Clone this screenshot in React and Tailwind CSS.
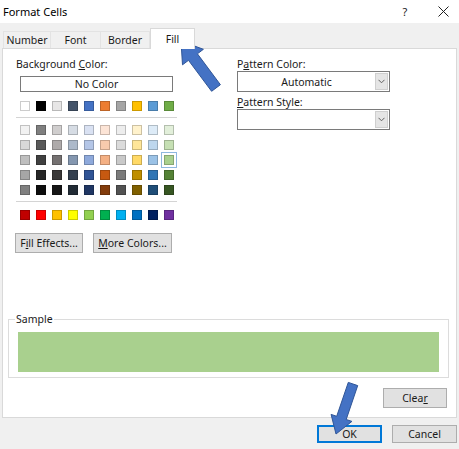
import React from "react";

const row1 = ["#FFFFFF", "#000000", "#E7E6E6", "#44546A", "#4472C4", "#ED7D31", "#A5A5A5", "#FFC000", "#5B9BD5", "#70AD47"];
const tints = [
  ["#F2F2F2", "#7F7F7F", "#D0CECE", "#D6DCE4", "#D9E1F2", "#FCE4D6", "#EDEDED", "#FFF2CC", "#DDEBF7", "#E2EFDA"],
  ["#D9D9D9", "#595959", "#AEAAAA", "#ACB9CA", "#B4C6E7", "#F8CBAD", "#DBDBDB", "#FFE699", "#BDD7EE", "#C6E0B4"],
  ["#BFBFBF", "#404040", "#757171", "#8497B0", "#8EA9DB", "#F4B084", "#C9C9C9", "#FFD966", "#9BC2E6", "#A9D08E"],
  ["#A6A6A6", "#262626", "#3A3838", "#333F4F", "#305496", "#C65911", "#7B7B7B", "#BF8F00", "#2F75B5", "#548235"],
  ["#808080", "#0D0D0D", "#161616", "#222B35", "#203764", "#833C0C", "#525252", "#806000", "#1F4E78", "#375623"],
];
const standard = ["#C00000", "#FF0000", "#FFC000", "#FFFF00", "#92D050", "#00B050", "#00B0F0", "#0070C0", "#002060", "#7030A0"];

function Swatch({ color, selected }) {
  return (
    <div
      className={
        "w-[10px] h-[10px] border border-black/20 " +
        (selected ? "outline outline-1 outline-offset-[2px] outline-[#8fb8e0]" : "")
      }
      style={{ backgroundColor: color }}
    />
  );
}

function SwatchRow({ colors, sel = -1 }) {
  return (
    <div className="flex gap-[6px] ml-[5px]">
      {colors.map((c, i) => (
        <Swatch key={i} color={c} selected={i === sel} />
      ))}
    </div>
  );
}

function Btn({ children, className = "" }) {
  return (
    <div
      className={
        "h-[20px] flex items-center justify-center bg-[#e1e1e1] border border-[#adadad] text-[#1a1a1a] " + className
      }
    >
      {children}
    </div>
  );
}

function Dropdown({ value }) {
  return (
    <div className="w-[153px] h-[21px] border border-[#7a7a7a] bg-white flex items-center">
      <div className="flex-1 text-center text-[#1a1a1a]">{value}</div>
      <div className="w-[13px] h-[17px] mr-[1px] bg-[#e5e5e5] border border-[#cfcfcf] flex items-center justify-center">
        <svg width="7" height="5" viewBox="0 0 7 5">
          <path d="M0.5 0.8 L3.5 3.8 L6.5 0.8" fill="none" stroke="#606060" strokeWidth="1" />
        </svg>
      </div>
    </div>
  );
}

function arrowPoints(tip, tail, shaftW, headW, headL) {
  const dx = tip[0] - tail[0];
  const dy = tip[1] - tail[1];
  const len = Math.hypot(dx, dy);
  const ux = dx / len;
  const uy = dy / len;
  const px = -uy;
  const py = ux;
  const bx = tip[0] - ux * headL;
  const by = tip[1] - uy * headL;
  const pts = [
    [tail[0] + (px * shaftW) / 2, tail[1] + (py * shaftW) / 2],
    [bx + (px * shaftW) / 2, by + (py * shaftW) / 2],
    [bx + (px * headW) / 2, by + (py * headW) / 2],
    tip,
    [bx - (px * headW) / 2, by - (py * headW) / 2],
    [bx - (px * shaftW) / 2, by - (py * shaftW) / 2],
    [tail[0] - (px * shaftW) / 2, tail[1] - (py * shaftW) / 2],
  ];
  return pts.map((p) => p[0].toFixed(1) + "," + p[1].toFixed(1)).join(" ");
}

export default function App() {
  return (
    <div
      className="relative w-[459px] h-[449px] bg-[#f0f0f0] flex flex-col text-[10.5px] leading-[14px] text-[#1a1a1a] overflow-hidden"
      style={{ fontFamily: '"Segoe UI", "Noto Sans", "Open Sans", sans-serif' }}
    >
      {/* Title bar */}
      <div className="h-[23px] bg-white flex items-center pl-[3px] pr-[10px]">
        <div className="flex-1 text-[11px] text-black">Format Cells</div>
        <div className="w-[10px] text-center text-[11px] mr-[28px]">?</div>
        <svg width="11" height="11" viewBox="0 0 11 11">
          <path d="M0.5 0.5 L10.5 10.5 M10.5 0.5 L0.5 10.5" stroke="#202020" strokeWidth="1" />
        </svg>
      </div>

      {/* Tabs */}
      <div className="h-[25px] flex items-end px-[3px]">
        <div className="w-[47px] h-[17px] flex items-center justify-center border-t border-l border-[#e3e3e3]">Number</div>
        <div className="w-[50px] h-[17px] flex items-center justify-center border-t border-l border-[#e3e3e3]">Font</div>
        <div className="w-[50px] h-[17px] flex items-center justify-center border-t border-l border-r border-[#e3e3e3]">Border</div>
        <div className="relative z-10 w-[45px] h-[21px] -mb-px bg-white flex items-center justify-center border-t border-l border-r border-[#d9d9d9]">
          Fill
        </div>
      </div>

      {/* Panel */}
      <div className="mx-[2px] h-[370px] bg-white border border-[#d9d9d9] flex flex-col">
        <div className="flex pt-[8px]">
          {/* Left column */}
          <div className="pl-[12px] w-[175px] flex flex-col">
            <div className="ml-px">
              Background <u>C</u>olor:
            </div>
            <div className="mt-[5px] ml-[5px] w-[153px] h-[16px] border border-[#7a7a7a] flex items-center justify-center">
              No Color
            </div>
            <div className="mt-[9px]">
              <SwatchRow colors={row1} />
            </div>
            <div className="mt-[6px] ml-px w-[161px] h-px bg-[#d4d4d4]" />
            <div className="mt-[7px] flex flex-col gap-[5px]">
              {tints.map((r, i) => (
                <SwatchRow key={i} colors={r} sel={i === 2 ? 9 : -1} />
              ))}
            </div>
            <div className="mt-[6px] ml-px w-[161px] h-px bg-[#d4d4d4]" />
            <div className="mt-[8px]">
              <SwatchRow colors={standard} />
            </div>
            <div className="mt-[13px] flex gap-[10px]">
              <Btn className="w-[68px]">
                F<u>i</u>ll Effects...
              </Btn>
              <Btn className="w-[79px]">
                <u>M</u>ore Colors...
              </Btn>
            </div>
          </div>

          {/* Right column */}
          <div className="ml-[59px] flex flex-col">
            <div>
              P<u>a</u>ttern Color:
            </div>
            <Dropdown value="Automatic" />
            <div className="mt-[3px]">
              <u>P</u>attern Style:
            </div>
            <Dropdown value="" />
          </div>
        </div>

        {/* Sample */}
        <fieldset className="mt-[59px] ml-[5px] mr-[7px] border border-[#dcdcdc] pt-[6px] pb-[5px]">
          <legend className="ml-[6px] px-px">Sample</legend>
          <div className="mx-[9px] h-[40px] bg-[#a9d08e]" />
        </fieldset>

        <div className="mt-[10px] flex justify-end pr-[9px]">
          <Btn className="w-[64px] h-[19px]">
            Clea<u>r</u>
          </Btn>
        </div>
      </div>

      {/* Footer */}
      <div className="flex justify-end gap-[10px] pt-[7px] pr-[2px]">
        <div className="w-[65px] h-[18px] flex items-center justify-center bg-[#e1e1e1] border-2 border-[#0078d7]">OK</div>
        <div className="w-[65px] h-[18px] flex items-center justify-center bg-[#e1e1e1] border border-[#adadad]">Cancel</div>
      </div>

      {/* Annotation arrows */}
      <svg className="absolute left-0 top-0 pointer-events-none" width="459" height="449" viewBox="0 0 459 449">
        <polygon
          points={arrowPoints([181, 41], [216, 88], 11, 26, 20)}
          fill="#4472c4"
          stroke="#2f5597"
          strokeWidth="1"
          strokeLinejoin="miter"
        />
        <polygon
          points={arrowPoints([336, 434], [353, 384], 10, 22, 17)}
          fill="#4472c4"
          stroke="#2f5597"
          strokeWidth="1"
          strokeLinejoin="miter"
        />
      </svg>
    </div>
  );
}
